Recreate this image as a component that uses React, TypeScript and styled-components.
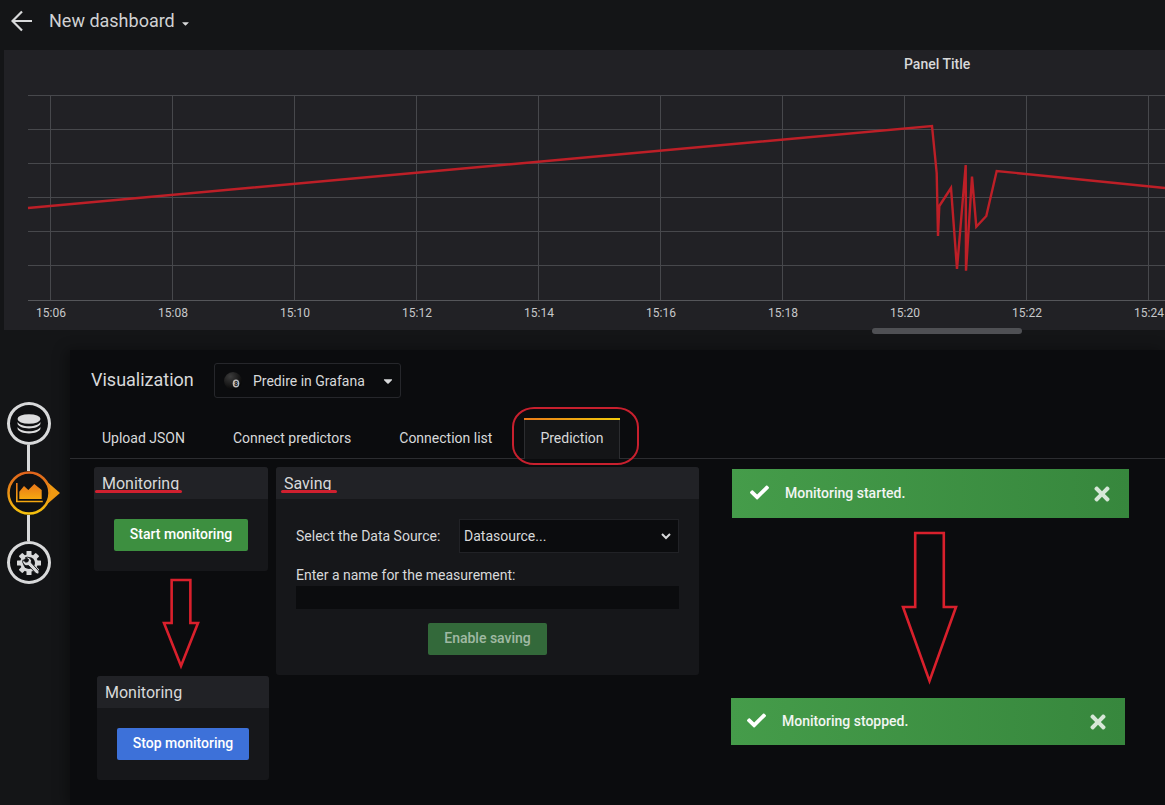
import React from "react";
import styled, { createGlobalStyle } from "styled-components";
import { FaCheck, FaTimes, FaCaretDown } from "react-icons/fa";

const Global = createGlobalStyle`
  html, body { margin: 0; padding: 0; background: #141517; }
  body { font-family: Roboto, "Liberation Sans", sans-serif; color: #d8d9da; overflow: hidden; }
  * { box-sizing: border-box; }
`;

const Page = styled.div`
  width: 1165px;
  height: 805px;
  display: flex;
  flex-direction: column;
  overflow: hidden;
  background: #141517;
`;

const TopBar = styled.header`
  height: 50px;
  flex: none;
  display: flex;
  align-items: center;
  padding: 0 0 8px 11px;
  color: #d8d9da;
`;

const BackIcon = styled.svg`
  display: block;
  flex: none;
`;

const DashTitle = styled.h1`
  margin: 0 0 0 16px;
  font-size: 18px;
  font-weight: 400;
  line-height: 24px;
  color: #d0d1d3;
`;

const Caret = styled.span`
  display: inline-flex;
  margin: 4px 0 0 5px;
  color: #d8d9da;
  font-size: 11px;
`;

const GraphPanel = styled.section`
  position: relative;
  flex: none;
  height: 280px;
  margin-left: 4px;
  background: #212125;
`;

const PanelTitle = styled.div`
  position: relative;
  height: 45px;
  padding: 6px 0 0 900px;
  font-size: 14px;
  font-weight: 500;
  line-height: 16px;
  color: #d8d9da;
`;

const Chart = styled.svg`
  position: absolute;
  left: 0;
  top: 0;
  display: block;
`;

const AxisLabel = styled.text`
  font-family: Roboto, "Liberation Sans", sans-serif;
  font-size: 12px;
  fill: #c7c8ca;
  text-anchor: middle;
`;

const ScrollThumb = styled.div`
  position: absolute;
  left: 868px;
  top: 278px;
  width: 150px;
  height: 6px;
  border-radius: 3px;
  background: #4f5054;
`;

const Editor = styled.div`
  flex: 1;
  display: flex;
  margin-top: 20px;
  min-height: 0;
`;

const Rail = styled.nav`
  width: 70px;
  flex: none;
  padding: 52px 0 0 7px;
  display: flex;
  flex-direction: column;
  align-items: flex-start;
`;

const Step = styled.div<{ $active?: boolean }>`
  position: relative;
  width: 44px;
  height: ${(p) => (p.$active ? 44 : 43)}px;
  border-radius: 50%;
  display: flex;
  align-items: center;
  justify-content: center;
  border: 3px solid #d8d9da;
  background: #0f1012;
  ${(p) => p.$active && `border: none; background: none;`}
`;

const Connector = styled.div<{ $h: number }>`
  width: 3px;
  height: ${(p) => p.$h}px;
  margin-left: 20px;
  background: #d8d9da;
`;

const ActiveRing = styled.svg`
  position: absolute;
  left: 0;
  top: 0;
  overflow: visible;
`;

const Main = styled.main`
  flex: 1;
  min-width: 0;
  background: #0b0c0e;
  box-shadow: -4px 0 12px rgba(0, 0, 0, 0.35);
  display: flex;
  flex-direction: column;
`;

const VizRow = styled.div`
  height: 68px;
  flex: none;
  padding: 13px 0 0 21px;
  display: flex;
  align-items: flex-start;
`;

const VizLabel = styled.div`
  width: 123px;
  height: 35px;
  font-size: 18px;
  line-height: 34px;
  color: #d8d9da;
`;

const Picker = styled.div`
  width: 187px;
  height: 35px;
  border: 1px solid #26272b;
  border-radius: 3px;
  display: flex;
  align-items: center;
  padding-left: 9px;
  font-size: 14px;
  color: #d8d9da;
`;

const PickerText = styled.span`
  margin-left: 9px;
  flex: 1;
`;

const PickerCaret = styled.span`
  display: inline-flex;
  margin-right: 5px;
  font-size: 14px;
  color: #d8d9da;
`;

const TabBar = styled.div`
  height: 41px;
  flex: none;
  display: flex;
  padding-left: 16px;
  border-bottom: 1px solid #2c2d30;
`;

const Tab = styled.div<{ $active?: boolean }>`
  position: relative;
  height: ${(p) => (p.$active ? 41 : 40)}px;
  padding: 12px 16px 0;
  margin-right: 16px;
  font-size: 14px;
  line-height: 16px;
  color: #d8d9da;
  ${(p) =>
    p.$active &&
    `
    background: #141517;
    padding: 12px 15px 0;
    border-left: 1px solid #2c2d30;
    border-right: 1px solid #2c2d30;
    &::before {
      content: "";
      position: absolute;
      left: -1px;
      right: -1px;
      top: 0;
      height: 2px;
      background: linear-gradient(90deg, #eb7b18 0%, #f2cc0c 100%);
    }
    `}
`;

const TabRing = styled.div`
  position: absolute;
  left: -13px;
  top: -11px;
  width: 127px;
  height: 58px;
  border: 2px solid #c8202e;
  border-radius: 22px / 20px;
  pointer-events: none;
`;

const Content = styled.div`
  flex: 1;
  display: flex;
  align-items: flex-start;
  padding: 8px 0 0 24px;
`;

const LeftColumn = styled.div`
  position: relative;
  width: 182px;
  flex: none;
`;

const Card = styled.section<{ $w: number; $h: number; $ml?: number; $mt?: number }>`
  width: ${(p) => p.$w}px;
  height: ${(p) => p.$h}px;
  margin-left: ${(p) => p.$ml ?? 0}px;
  margin-top: ${(p) => p.$mt ?? 0}px;
  background: #16171a;
  border-radius: 3px;
`;

const CardHeader = styled.div`
  position: relative;
  height: 32px;
  padding-left: 8px;
  background: #212226;
  border-radius: 3px 3px 0 0;
  font-size: 16px;
  line-height: 33px;
  color: #d8d9da;
`;

const RedRule = styled.span<{ $l: number; $w: number }>`
  position: absolute;
  left: ${(p) => p.$l}px;
  top: 23px;
  width: ${(p) => p.$w}px;
  height: 3px;
  background: #d0202f;
  border-radius: 2px;
`;

const CardBody = styled.div<{ $pl?: number }>`
  padding: 20px 0 0 ${(p) => p.$pl ?? 20}px;
`;

const Btn = styled.div<{ $w: number; $bg: string; $dim?: boolean }>`
  width: ${(p) => p.$w}px;
  height: 32px;
  padding-bottom: 2px;
  background: ${(p) => p.$bg};
  border-radius: 2px;
  display: flex;
  align-items: center;
  justify-content: center;
  font-size: 14px;
  font-weight: 500;
  color: ${(p) => (p.$dim ? "rgba(255,255,255,0.55)" : "#fff")};
`;

const Arrow = styled.svg`
  display: block;
  overflow: visible;
`;

const ArrowOverlay = styled.div`
  position: absolute;
  left: 69px;
  top: 112px;
`;

const SelectRow = styled.div`
  display: flex;
  align-items: center;
  height: 34px;
  font-size: 14px;
  color: #d8d9da;
`;

const RowLabel = styled.label`
  width: 163px;
  flex: none;
`;

const SelectBox = styled.div`
  width: 220px;
  height: 34px;
  background: #0b0c0e;
  border: 1px solid #212226;
  display: flex;
  align-items: center;
  justify-content: space-between;
  padding: 0 6px 0 4px;
  color: #d8d9da;
`;

const FieldLabel = styled.label`
  display: block;
  margin-top: 14px;
  font-size: 14px;
  line-height: 16px;
  color: #d8d9da;
`;

const TextInput = styled.div`
  width: 383px;
  height: 23px;
  margin-top: 3px;
  background: #0b0c0e;
`;

const ButtonRow = styled.div`
  display: flex;
  padding: 14px 0 0 132px;
`;

const ToastColumn = styled.div`
  width: 398px;
  margin-left: 33px;
  padding-top: 2px;
  flex: none;
  display: flex;
  flex-direction: column;
`;

const Toast = styled.div<{ $w: number; $h: number; $ml?: number; $pl: number }>`
  width: ${(p) => p.$w}px;
  height: ${(p) => p.$h}px;
  margin-left: ${(p) => p.$ml ?? 0}px;
  background: linear-gradient(90deg, #459c4a 0%, #37873d 100%);
  display: flex;
  align-items: center;
  padding: 0 16px 2px ${(p) => p.$pl}px;
  color: #fff;
`;

const ToastText = styled.span`
  flex: 1;
  margin-left: 16px;
  font-size: 14px;
  font-weight: 500;
  color: #f2f5f2;
`;

const Close = styled.span`
  display: inline-flex;
  font-size: 22px;
  color: rgba(255, 255, 255, 0.8);
  margin-top: 3px;
`;

const ArrowWrap = styled.div`
  height: 180px;
  padding: 14px 0 0 170px;
`;

const seriesPoints =
  "24,158 928,76 932.7,123 934,186 935.3,156 947,138 953,219 961.7,115 962,220.7 968,126.7 972.3,176.7 982.3,166 992.7,121 1161,138";

const hLines = [45, 79, 113, 147, 181, 215];
const ticks = [
  ["15:06", 46],
  ["15:08", 168],
  ["15:10", 290],
  ["15:12", 412],
  ["15:14", 534],
  ["15:16", 656],
  ["15:18", 778],
  ["15:20", 900],
  ["15:22", 1022],
  ["15:24", 1144],
] as const;

const DownArrow = ({ w, h }: { w: number; h: number }) => {
  const sh = w * 0.26;
  const neck = h * 0.5;
  const c = w / 2;
  return (
    <Arrow width={w} height={h} viewBox={`0 0 ${w} ${h}`}>
      <polygon
        points={`${c - sh},1 ${c + sh},1 ${c + sh},${neck} ${w - 1},${neck} ${c},${h - 1} 1,${neck} ${c - sh},${neck}`}
        fill="none"
        stroke="#d9202c"
        strokeWidth="2.6"
      />
    </Arrow>
  );
};

const DbIcon = () => (
  <svg width="24" height="20" viewBox="0 0 24 20">
    <ellipse cx="12" cy="5" rx="11.5" ry="4.8" fill="#dcdcdd" />
    <path d="M.6 8c1.500 2.600 5.500 4.200 11.400 4.200S21.900 10.600 23.400 8v2c-1.300 2.800-5.500 4.400-11.400 4.400S1.900 12.800.6 10z" fill="#dcdcdd" />
    <path d="M.6 13c1.500 2.600 5.500 4.200 11.400 4.200S21.900 15.600 23.400 13v2c-1.300 2.800-5.500 4.400-11.400 4.400S1.900 17.800.6 15z" fill="#dcdcdd" />
  </svg>
);

const GearIcon = () => (
  <svg width="26" height="26" viewBox="0 0 26 26">
    <g fill="#d8d9da">
      {[0, 45, 90, 135, 180, 225, 270, 315].map((a) => (
        <rect key={a} x="10.500" y="1" width="5" height="5" rx="0.600" transform={`rotate(${a} 13 13)`} />
      ))}
      <circle cx="13" cy="13" r="8.800" />
    </g>
    <circle cx="13" cy="13" r="6" fill="#0f1012" />
    <path d="M9.500 7.500a4.300 4.300 0 0 1 5.800 5.300l7.300 8a1.800 1.800 0 0 1-2.700 2.500l-7.400-7.800A4.300 4.300 0 0 1 7 9.800l2.800 2.400 2.200-.6.500-2.100z" fill="#d8d9da" stroke="#0f1012" strokeWidth="0.900" />
  </svg>
);

const GrafBall = () => (
  <svg width="20" height="20" viewBox="0 0 20 20">
    <defs>
      <radialGradient id="ball" cx="0.35" cy="0.25" r="0.8">
        <stop offset="0" stopColor="#3c3c3c" />
        <stop offset="1" stopColor="#030303" />
      </radialGradient>
    </defs>
    <circle cx="9" cy="10" r="9" fill="url(#ball)" />
    <ellipse cx="12" cy="12.500" rx="3.300" ry="4" fill="#bdbdbd" />
    <text x="12" y="15" fontSize="6.500" textAnchor="middle" fill="#111" fontFamily="Roboto, sans-serif" fontWeight="700">8</text>
  </svg>
);

export default function App() {
  return (
    <Page>
      <Global />
      <TopBar>
        <BackIcon width="22" height="22" viewBox="0 0 22 22">
          <path d="M21 11H2 M11 1.500 L1.500 11 L11 20.500" fill="none" stroke="#d8d9da" strokeWidth="2.200" />
        </BackIcon>
        <DashTitle>New dashboard</DashTitle>
        <Caret>
          <FaCaretDown />
        </Caret>
      </TopBar>

      <GraphPanel>
        <Chart width="1161" height="280" viewBox="0 0 1161 280">
          {hLines.map((y) => (
            <line key={y} x1="24" x2="1161" y1={y + 0.5} y2={y + 0.5} stroke="#47484c" strokeWidth="1" />
          ))}
          <line x1="24" x2="1161" y1="250.500" y2="250.500" stroke="#55565a" strokeWidth="1" />
          {ticks.map(([t, x]) => (
            <React.Fragment key={t}>
              <line x1={x + 0.5} x2={x + 0.5} y1="45" y2="250" stroke="#47484c" strokeWidth="1" />
              <AxisLabel x={x + 1} y="267">
                {t}
              </AxisLabel>
            </React.Fragment>
          ))}
          <polyline points={seriesPoints} fill="none" stroke="#bd1f27" strokeWidth="2.400" strokeLinejoin="miter" />
        </Chart>
        <PanelTitle>Panel Title</PanelTitle>
        <ScrollThumb />
      </GraphPanel>

      <Editor>
        <Rail>
          <Step>
            <DbIcon />
          </Step>
          <Connector $h={26} />
          <Step $active>
            <ActiveRing width="44" height="44" viewBox="0 0 44 44">
              <defs>
                <linearGradient id="ring" x1="0" y1="0" x2="0" y2="1">
                  <stop offset="0" stopColor="#e0641c" />
                  <stop offset="1" stopColor="#f5c10e" />
                </linearGradient>
                <linearGradient id="fillO" x1="0" y1="0" x2="0" y2="1">
                  <stop offset="0" stopColor="#e8761a" />
                  <stop offset="1" stopColor="#f6a80f" />
                </linearGradient>
              </defs>
              <path d="M38 9 L53 22 L38 35 Z" fill="#f09a12" />
              <circle cx="22" cy="22" r="20.500" fill="#0f1012" stroke="url(#ring)" strokeWidth="2.500" />
              <path d="M9.800 12 V30.500 H35.800" fill="none" stroke="url(#fillO)" strokeWidth="1.600" />
              <path d="M12.300 28 V20.700 L17 15 L21.300 19 L27.300 13 L34.700 19 V28 Z" fill="url(#fillO)" />
            </ActiveRing>
          </Step>
          <Connector $h={26} />
          <Step>
            <GearIcon />
          </Step>
        </Rail>

        <Main>
          <VizRow>
            <VizLabel>Visualization</VizLabel>
            <Picker>
              <GrafBall />
              <PickerText>Predire in Grafana</PickerText>
              <PickerCaret>
                <FaCaretDown />
              </PickerCaret>
            </Picker>
          </VizRow>

          <TabBar>
            <Tab>Upload JSON</Tab>
            <Tab>Connect predictors</Tab>
            <Tab>Connection list</Tab>
            <Tab $active>
              Prediction
              <TabRing />
            </Tab>
          </TabBar>

          <Content>
            <LeftColumn>
              <Card $w={174} $h={104}>
                <CardHeader>
                  Monitoring
                  <RedRule $l={1} $w={87} />
                </CardHeader>
                <CardBody>
                  <Btn $w={134} $bg="#3d8f40">
                    Start monitoring
                  </Btn>
                </CardBody>
              </Card>
              <ArrowOverlay>
                <DownArrow w={36} h={88} />
              </ArrowOverlay>
              <Card $w={172} $h={104} $ml={3} $mt={105}>
                <CardHeader>Monitoring</CardHeader>
                <CardBody>
                  <Btn $w={132} $bg="#3d71d9">
                    Stop monitoring
                  </Btn>
                </CardBody>
              </Card>
            </LeftColumn>

            <Card $w={423} $h={208}>
              <CardHeader>
                Saving
                <RedRule $l={5} $w={56} />
              </CardHeader>
              <CardBody>
                <SelectRow>
                  <RowLabel>Select the Data Source:</RowLabel>
                  <SelectBox>
                    Datasource...
                    <svg width="12" height="12" viewBox="0 0 12 12">
                      <path d="M2 4l4 4 4-4" fill="none" stroke="#d8d9da" strokeWidth="2" />
                    </svg>
                  </SelectBox>
                </SelectRow>
                <FieldLabel>Enter a name for the measurement:</FieldLabel>
                <TextInput />
                <ButtonRow>
                  <Btn $w={119} $bg="#33693a" $dim>
                    Enable saving
                  </Btn>
                </ButtonRow>
              </CardBody>
            </Card>

            <ToastColumn>
              <Toast $w={397} $h={49} $pl={18}>
                <FaCheck size={19} />
                <ToastText>Monitoring started.</ToastText>
                <Close>
                  <FaTimes />
                </Close>
              </Toast>
              <ArrowWrap>
                <DownArrow w={55} h={150} />
              </ArrowWrap>
              <Toast $w={394} $h={47} $ml={-1} $pl={16}>
                <FaCheck size={19} />
                <ToastText>Monitoring stopped.</ToastText>
                <Close>
                  <FaTimes />
                </Close>
              </Toast>
            </ToastColumn>
          </Content>
        </Main>
      </Editor>
    </Page>
  );
}
